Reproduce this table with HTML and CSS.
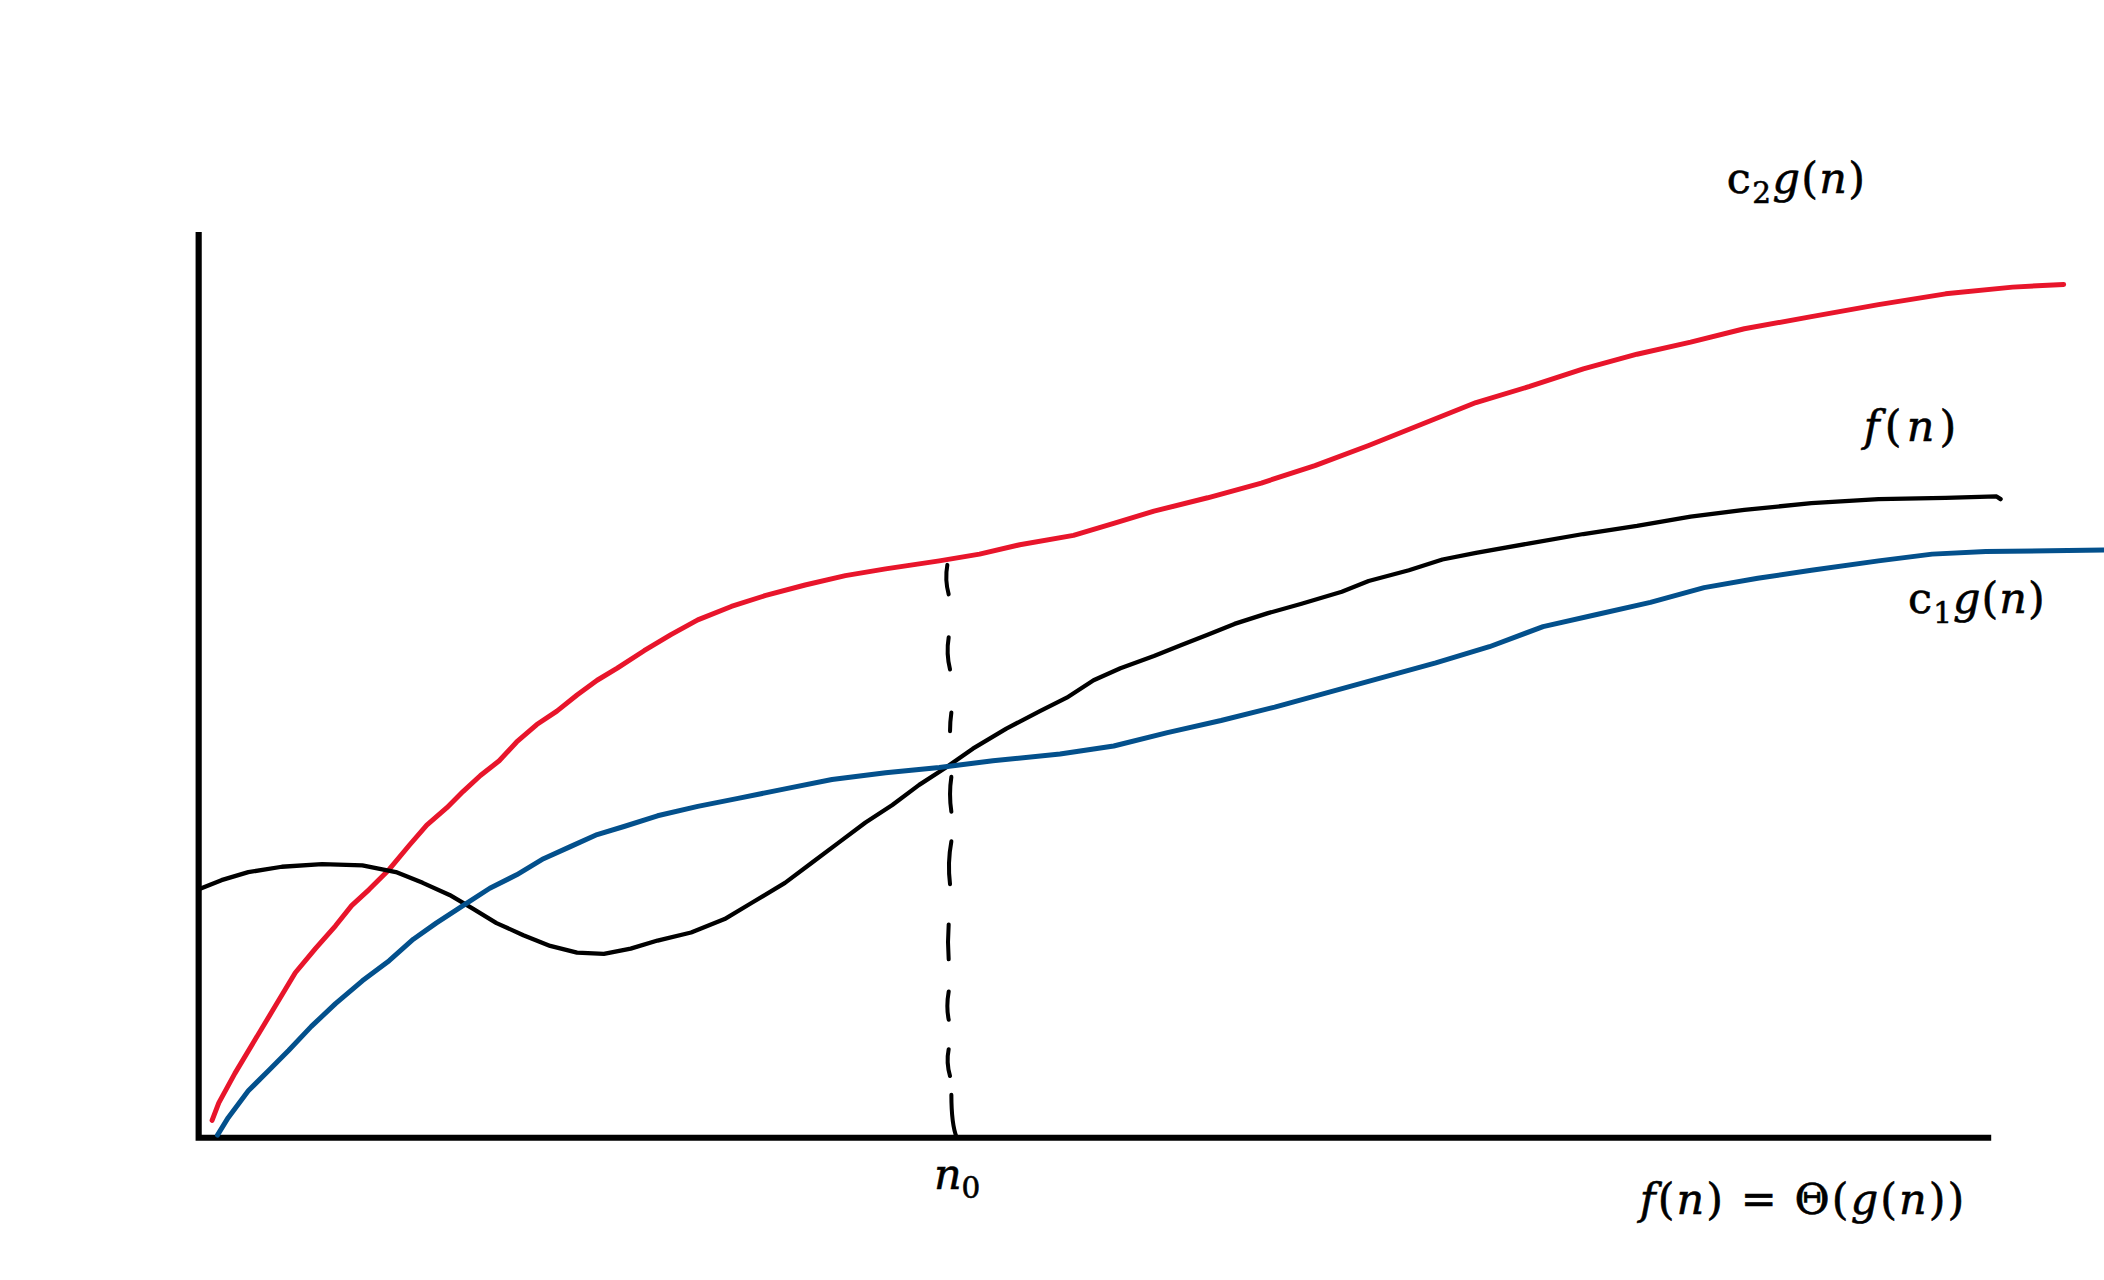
FILE: index.html
```html
<!DOCTYPE html>
<html lang="en">
<head>
<meta charset="utf-8">
<title>f(n) = Θ(g(n))</title>
<link rel="stylesheet" href="styles.css">
</head>
<body>
<main class="canvas">
<svg class="chart" viewBox="0 0 1568 954" width="2104" height="1280" xmlns="http://www.w3.org/2000/svg">
  <!-- axes -->
  <path class="axis" d="M148 173 V848 H1484"/>

  <!-- c2 g(n) : red -->
  <polyline class="curve red" points="158,835 163,822 175,800 190,775 205,750 220,725 235,707 250,690 262,675 275,663 290,648 305,630 318,615 333,602 345,590 358,578 372,567 385,553 400,540 415,530 430,518 445,507 460,498 480,485 500,473 520,462 545,452 570,444 600,436 630,429 660,424 700,418 730,413 760,406 800,399 830,390 860,381 900,371 940,360 980,347 1020,332 1060,316 1100,300 1140,288 1180,275 1220,264 1260,255 1300,245 1350,236 1400,227 1450,219 1500,214 1538,212"/>

  <!-- f(n) : black -->
  <polyline class="curve black" points="150,662 165,656 185,650 210,646 240,644 270,645 295,650 315,658 335,667 352,677 370,688 390,697 410,705 430,710 450,711 470,707 490,701 515,695 540,685 560,673 585,658 605,643 625,628 645,613 665,600 685,585 705,572 725,558 750,543 775,530 795,520 815,507 835,498 860,489 880,481 900,473 920,465 945,457 970,450 1000,441 1020,433 1050,425 1075,417 1100,412 1140,405 1180,398 1220,392 1260,385 1300,380 1350,375 1400,372 1450,371 1488,370 1491,372"/>

  <!-- c1 g(n) : blue -->
  <polyline class="curve blue" points="162,846 170,833 185,813 200,798 215,783 232,765 250,748 270,731 290,716 308,700 325,688 345,675 365,662 385,652 405,640 425,631 445,622 465,616 490,608 520,601 550,595 585,588 620,581 660,576 700,572 740,567 790,562 830,556 870,546 910,537 950,527 990,516 1030,505 1070,494 1110,482 1150,467 1190,458 1230,449 1270,438 1310,431 1350,425 1400,418 1440,413 1480,411 1568,410"/>

  <!-- n0 dashed marker -->
  <g class="dash">
    <path d="M706 421 Q704 432 707 443"/>
    <path d="M707 475 Q705 487 708 499"/>
    <path d="M709 531 Q708 538 708 545"/>
    <path d="M709 579 Q707 592 709 605"/>
    <path d="M709 627 Q706 643 708 659"/>
    <path d="M707 689 Q706 702 707 715"/>
    <path d="M707 739 Q705 750 707 760"/>
    <path d="M707 782 Q705 792 708 802"/>
    <path d="M709 816 Q709 838 713 848"/>
  </g>

  <!-- labels -->
  <text class="lbl" x="1287" y="144" textLength="103" lengthAdjust="spacing">c<tspan class="sub" dy="7">2</tspan><tspan class="it" dy="-7">g</tspan>(<tspan class="it">n</tspan>)</text>
  <text class="lbl" x="1389" y="329" textLength="69" lengthAdjust="spacing"><tspan class="it">f</tspan>(<tspan class="it">n</tspan>)</text>
  <text class="lbl" x="1422" y="457" textLength="102" lengthAdjust="spacing">c<tspan class="sub" dy="7">1</tspan><tspan class="it" dy="-7">g</tspan>(<tspan class="it">n</tspan>)</text>
  <text class="lbl" x="696" y="886"><tspan class="it">n</tspan><tspan class="sub" dy="7">0</tspan></text>
  <text class="lbl" x="1222" y="905" textLength="242" lengthAdjust="spacing"><tspan class="it">f</tspan>(<tspan class="it">n</tspan>) = Θ(<tspan class="it">g</tspan>(<tspan class="it">n</tspan>))</text>
</svg>
</main>
</body>
</html>
```

FILE: styles.css
```css
html, body {
  margin: 0;
  padding: 0;
  background: #ffffff;
}

.canvas {
  width: 2104px;
  height: 1280px;
  overflow: hidden;
  background: #ffffff;
}

.chart {
  display: block;
}

.axis {
  fill: none;
  stroke: #000000;
  stroke-width: 4.6;
  stroke-linejoin: miter;
}

.curve {
  fill: none;
  stroke-width: 3.7;
  stroke-linejoin: round;
  stroke-linecap: round;
}

.red { stroke: #e8152b; }
.black { stroke: #000000; stroke-width: 3.2; }
.blue { stroke: #03508c; }

.dash path {
  fill: none;
  stroke: #000000;
  stroke-width: 3;
  stroke-linecap: round;
}

.lbl {
  font-family: "DejaVu Serif", "Liberation Serif", serif;
  font-size: 32px;
  fill: #000000;
  stroke: #000000;
  stroke-width: 0.45;
}

.it {
  font-style: italic;
}

.sub {
  font-size: 22px;
}
```
